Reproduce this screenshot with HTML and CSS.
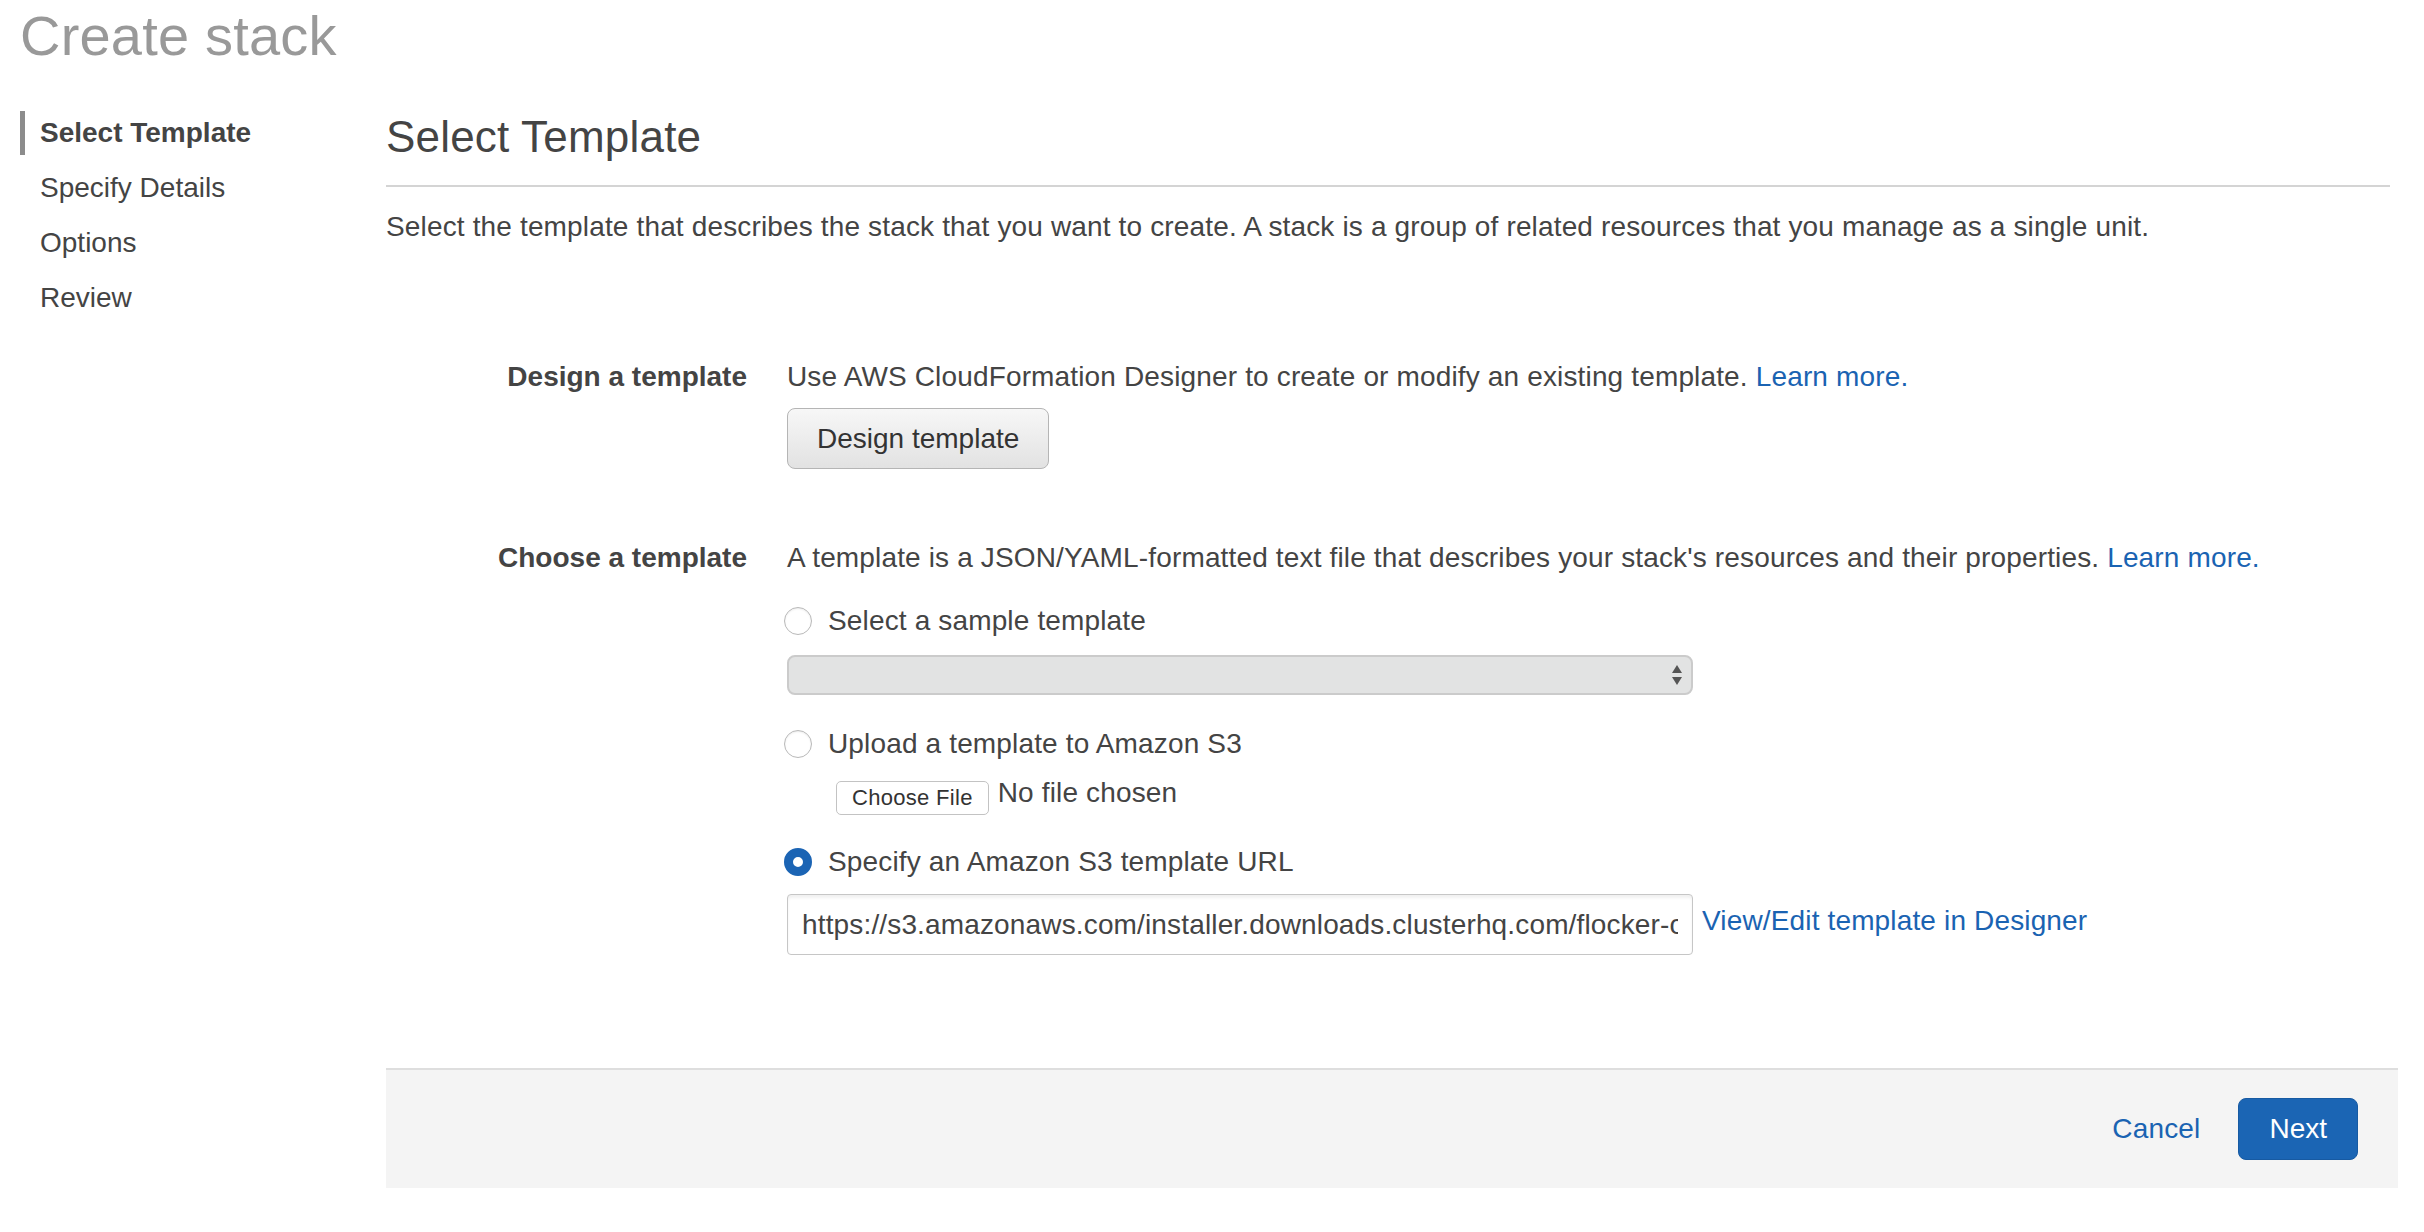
FILE: index.html
```html
<!DOCTYPE html>
<html lang="en">
<head>
<meta charset="utf-8">
<title>Create stack</title>
<link rel="stylesheet" href="styles.css">
</head>
<body>
<h1 class="page-title">Create stack</h1>
<div class="layout">
  <nav class="steps">
    <div class="step active">Select Template</div>
    <div class="step">Specify Details</div>
    <div class="step">Options</div>
    <div class="step">Review</div>
  </nav>
  <main class="main">
    <h2 class="section-title">Select Template</h2>
    <hr class="rule">
    <p class="intro">Select the template that describes the stack that you want to create. A stack is a group of related resources that you manage as a single unit.</p>

    <div class="form-row design-row">
      <div class="label">Design a template</div>
      <div class="field">
        <div class="text-line">Use AWS CloudFormation Designer to create or modify an existing template. <a class="link" href="#">Learn more.</a></div>
        <button class="btn-default" type="button">Design template</button>
      </div>
    </div>

    <div class="form-row choose-row">
      <div class="label">Choose a template</div>
      <div class="field">
        <div class="text-line">A template is a JSON/YAML-formatted text file that describes your stack's resources and their properties. <a class="link" href="#">Learn more.</a></div>
        <label class="radio-line first"><input type="radio" name="src" class="radio"><span>Select a sample template</span></label>
        <div class="select-box">
          <svg class="select-arrows" width="12" height="24" viewBox="0 0 12 24"><path d="M6 2 L11 10 L1 10 Z" fill="#555"/><path d="M1 14 L11 14 L6 22 Z" fill="#555"/></svg>
        </div>
        <label class="radio-line second"><input type="radio" name="src" class="radio"><span>Upload a template to Amazon S3</span></label>
        <div class="file-line"><span class="file-btn">Choose File</span><span class="file-name">No file chosen</span></div>
        <label class="radio-line third"><input type="radio" name="src" class="radio" checked><span>Specify an Amazon S3 template URL</span></label>
        <div class="url-line">
          <input class="url-input" type="text" value="https://s3.amazonaws.com/installer.downloads.clusterhq.com/flocker-cluster.cloudformation.json">
          <a class="link url-link" href="#">View/Edit template in Designer</a>
        </div>
      </div>
    </div>

    <div class="footer">
      <a class="link cancel" href="#">Cancel</a>
      <button class="btn-primary" type="button">Next</button>
    </div>
  </main>
</div>
</body>
</html>
```

FILE: styles.css
```css
* { box-sizing: border-box; }

body {
  margin: 0;
  background: #fff;
  font-family: "Liberation Sans", Arial, Helvetica, sans-serif;
  color: #444;
  font-size: 28px;
}

.page-title {
  margin: 0;
  padding: 4px 0 0 20px;
  font-size: 56px;
  line-height: 64px;
  font-weight: normal;
  color: #999;
  letter-spacing: 0.2px;
}

.layout {
  display: flex;
  margin-top: 40px;
}

.steps {
  width: 386px;
  flex: none;
  padding: 3px 0 0 20px;
  display: flex;
  flex-direction: column;
  gap: 11px;
}

.step {
  height: 44px;
  line-height: 44px;
  padding-left: 20px;
  font-size: 28px;
  color: #444;
}

.step.active {
  border-left: 5px solid #8c8c8c;
  padding-left: 15px;
  font-weight: bold;
}

.main {
  flex: none;
  width: 2012px;
  letter-spacing: 0.15px;
}

.section-title {
  margin: 3px 0 0;
  font-size: 44px;
  line-height: 52px;
  font-weight: normal;
  color: #444;
  letter-spacing: 0.2px;
}

.rule {
  margin: 22px 0 0;
  width: 2004px;
  border: 0;
  height: 2px;
  background: #d4d4d4;
}

.intro {
  margin: 20px 0 0;
  line-height: 40px;
}

.form-row {
  display: grid;
  grid-template-columns: 361px 1fr;
  column-gap: 40px;
}

.design-row { margin-top: 110px; }
.choose-row { margin-top: 69px; }

.label {
  text-align: right;
  font-weight: bold;
  line-height: 40px;
  letter-spacing: 0;
}

.field {
  display: flex;
  flex-direction: column;
  align-items: flex-start;
}

.text-line { line-height: 40px; }

.link {
  color: #1a63b2;
  text-decoration: none;
}

.btn-default {
  margin-top: 11px;
  height: 61px;
  padding: 0 29px;
  font-family: inherit;
  font-size: 28px;
  color: #333;
  background: linear-gradient(#f7f7f7, #e2e2e2);
  border: 1px solid #b5b5b5;
  border-radius: 8px;
}

.radio-line {
  display: flex;
  align-items: center;
  gap: 16px;
  height: 40px;
  line-height: 40px;
  margin-left: -3px;
}
.radio-line.first { margin-top: 23px; }
.radio-line.second { margin-top: 29px; }
.radio-line.third { margin-top: 24px; }

.radio {
  appearance: none;
  -webkit-appearance: none;
  margin: 0;
  width: 28px;
  height: 28px;
  border-radius: 50%;
  border: 1px solid #b9b9b9;
  background: #fff;
  box-shadow: inset 0 1px 2px rgba(0,0,0,0.08);
  flex: none;
}
.radio:checked {
  border: 9px solid #1b64b4;
  background: #fff;
  box-shadow: none;
}

.select-box {
  margin-top: 14px;
  width: 906px;
  height: 40px;
  border: 2px solid #cbcbcb;
  border-radius: 8px;
  background: #e2e3e3;
  display: flex;
  align-items: center;
  justify-content: flex-end;
  padding-right: 8px;
}

.file-line {
  margin-top: 14px;
  margin-left: 49px;
  height: 40px;
  display: flex;
  align-items: center;
  gap: 9px;
}

.file-btn {
  height: 34px;
  line-height: 32px;
  padding: 0 15px;
  font-size: 22px;
  letter-spacing: 0.3px;
  color: #333;
  background: #fff;
  border: 1px solid #c3c3c3;
  border-radius: 5px;
}

.file-name {
  margin-bottom: 10px;
}

.url-line {
  margin-top: 12px;
  display: flex;
  align-items: center;
  gap: 9px;
}

.url-input {
  width: 906px;
  height: 61px;
  padding: 0 14px;
  font-family: inherit;
  font-size: 28px;
  letter-spacing: 0.15px;
  color: #444;
  border: 1px solid #c6c6c6;
  border-radius: 4px;
  background: #fff;
  box-shadow: inset 0 3px 3px rgba(0,0,0,0.06);
  outline: none;
}

.url-link {
  margin-bottom: 8px;
}

.footer {
  margin-top: 113px;
  width: 2012px;
  height: 120px;
  background: #f4f4f4;
  border-top: 2px solid #dedede;
  display: flex;
  align-items: center;
  justify-content: flex-end;
  gap: 38px;
  padding-right: 40px;
}

.btn-primary {
  height: 62px;
  padding: 0 30px;
  font-family: inherit;
  font-size: 28px;
  color: #fff;
  background: #1b65b4;
  border: 1px solid #175aa2;
  border-radius: 8px;
}
```
